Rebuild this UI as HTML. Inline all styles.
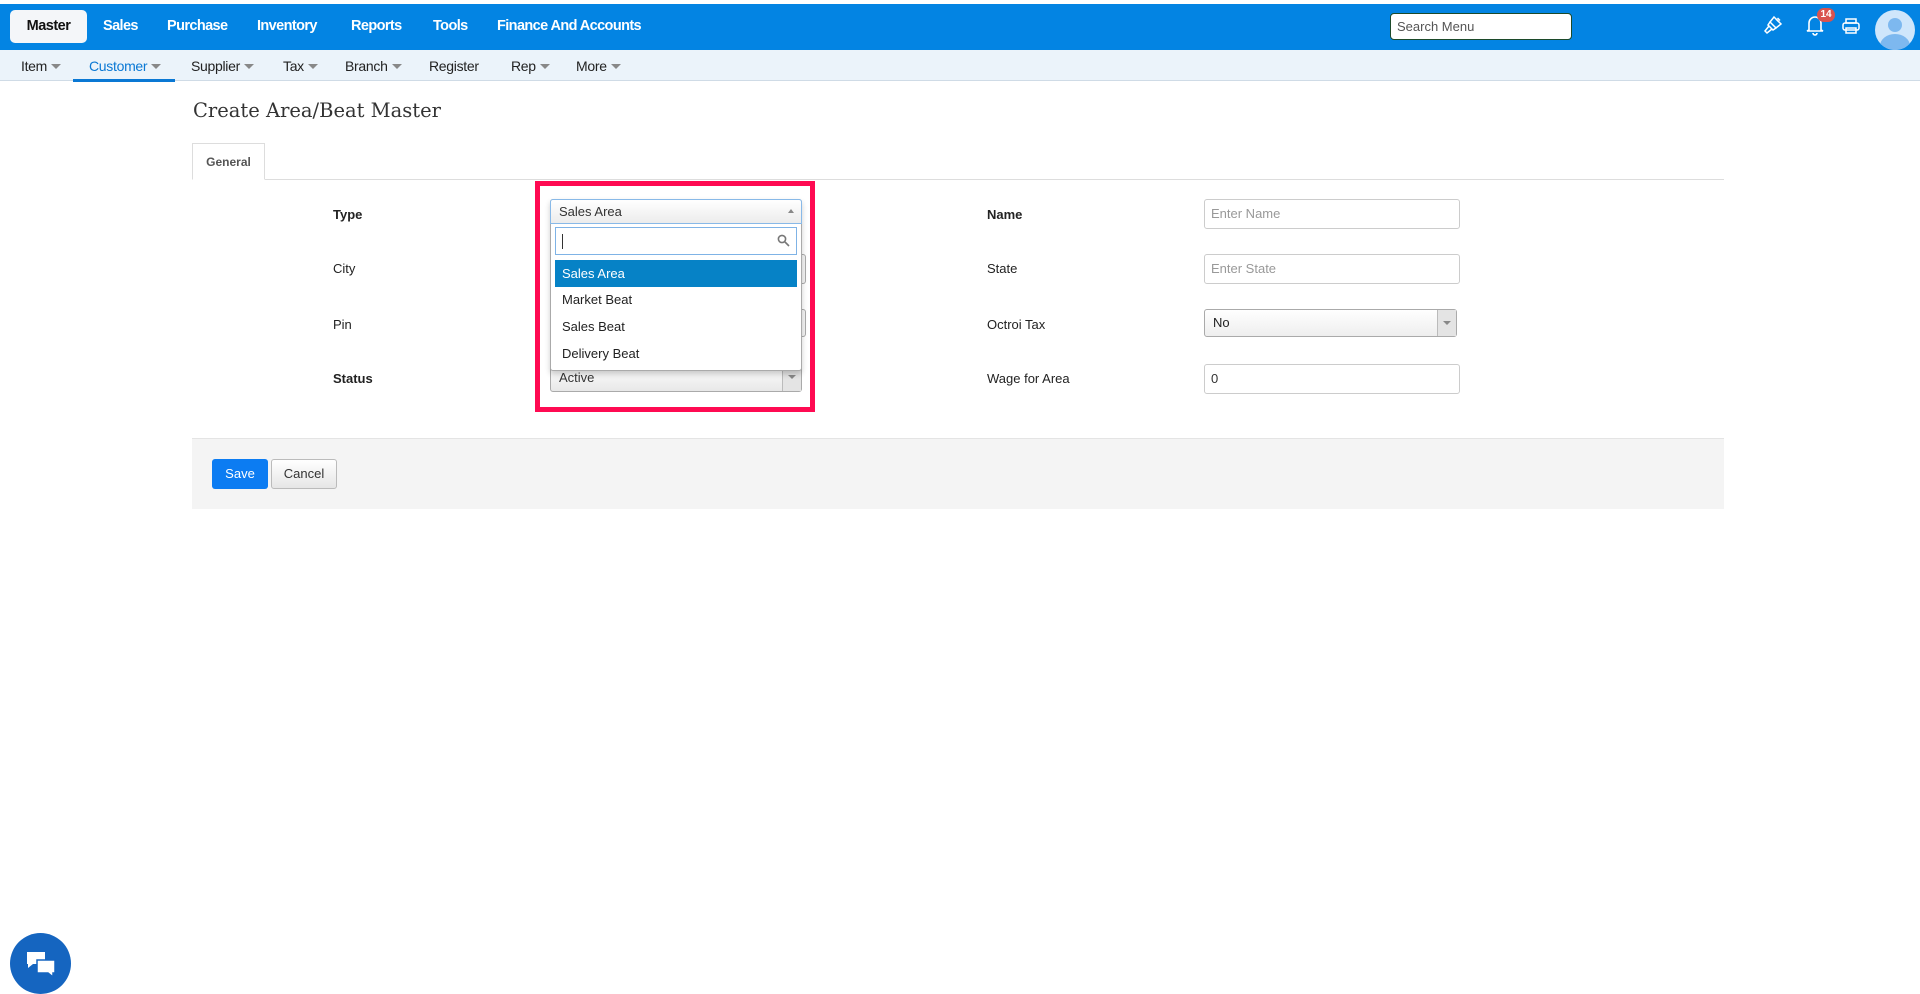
<!DOCTYPE html>
<html><head><meta charset="utf-8"><style>
*{box-sizing:border-box;margin:0;padding:0}
body{width:1920px;height:978px;background:#fff;font-family:"Liberation Sans",sans-serif;position:relative;overflow:hidden;color:#333}
.abs{position:absolute}
#top{left:0;top:4px;width:1920px;height:46px;background:#0384e3}
.tm{position:absolute;top:18px;color:#fff;font-weight:bold;font-size:14.5px;letter-spacing:-0.6px}
#master{left:10px;top:10px;width:77px;height:33px;background:#f4f6f9;border-radius:5px;color:#111;font-weight:bold;font-size:14.5px;text-align:center;line-height:33px;position:absolute;letter-spacing:-0.5px}
#search{left:1390px;top:13px;width:182px;height:27px;background:#fff;border:1px solid #1c4a2a;border-radius:4px;font-size:13px;color:#555;padding-left:6px;line-height:25px}
#sub{left:0;top:50px;width:1920px;height:31px;background:#ebf3fa;border-bottom:1px solid #cfdbe6}
.si{position:absolute;top:58px;font-size:14px;color:#222;letter-spacing:-0.3px}
.ar{display:inline-block;width:0;height:0;border-left:5px solid transparent;border-right:5px solid transparent;border-top:5px solid #888;margin-left:4px;vertical-align:2px}
.lbl{position:absolute;font-size:13px;color:#222}
.b{font-weight:bold}
.inp{position:absolute;border:1px solid #ccc;border-radius:3px;background:#fff;font-size:13px;color:#999;padding-left:6px}
.sel{position:absolute;border:1px solid #aaa;border-radius:3px;background:linear-gradient(#fff,#eee);font-size:13px;color:#333;padding-left:8px}
.opt{position:absolute;left:555px;width:242px;height:27px;font-size:13px;color:#222;padding-left:7px;line-height:27px}
</style></head><body>
<div id="top" class="abs"></div>
<div id="master">Master</div>
<div class="tm" style="left:103px">Sales</div>
<div class="tm" style="left:167px">Purchase</div>
<div class="tm" style="left:257px">Inventory</div>
<div class="tm" style="left:351px">Reports</div>
<div class="tm" style="left:433px">Tools</div>
<div class="tm" style="left:497px">Finance And Accounts</div>
<div id="search" class="abs">Search Menu</div>
<svg class="abs" style="left:1762px;top:14px" width="22" height="22" viewBox="0 0 22 22" fill="none" stroke="#fff" stroke-width="1.5"><path d="M12 3l7 7-5 4-6-6z"/><path d="M8 8l-2 3 5 5 3-2"/><path d="M7 12l-4 5 2 2 5-4"/><path d="M14 5l3 3M15.5 4l2.5 2.5"/></svg>
<svg class="abs" style="left:1805px;top:14px" width="20" height="22" viewBox="0 0 20 22" fill="none" stroke="#fff" stroke-width="1.6"><path d="M4 16V9a6 6 0 0112 0v7l2 1H2z"/><path d="M8 19a2 2 0 004 0"/></svg>
<div class="abs" style="left:1817px;top:8px;width:18px;height:14px;border-radius:7px;background:#d9534f;color:#fff;font-size:10px;font-weight:bold;text-align:center;line-height:14px">14</div>
<svg class="abs" style="left:1842px;top:18px" width="18" height="16" viewBox="0 0 18 16" fill="none" stroke="#fff" stroke-width="1.5"><rect x="4" y="1" width="10" height="4"/><rect x="1" y="5" width="16" height="7" rx="2"/><rect x="4" y="10" width="10" height="5"/></svg>
<div class="abs" style="left:1875px;top:10px;width:40px;height:40px;border-radius:50%;background:#cfe6fb;overflow:hidden"><div class="abs" style="left:13px;top:8px;width:14px;height:14px;border-radius:50%;background:#7db8ef"></div><div class="abs" style="left:5px;top:24px;width:30px;height:24px;border-radius:50%;background:#7db8ef"></div></div>
<div id="sub" class="abs"></div>
<div class="si" style="left:21px">Item<span class="ar"></span></div>
<div class="si" style="left:89px;color:#0a78d4">Customer<span class="ar"></span></div>
<div class="abs" style="left:73px;top:79px;width:102px;height:3px;background:#0a78d4"></div>
<div class="si" style="left:191px">Supplier<span class="ar"></span></div>
<div class="si" style="left:283px">Tax<span class="ar"></span></div>
<div class="si" style="left:345px">Branch<span class="ar"></span></div>
<div class="si" style="left:429px">Register</div>
<div class="si" style="left:511px">Rep<span class="ar"></span></div>
<div class="si" style="left:576px">More<span class="ar"></span></div>
<div class="abs" style="left:193px;top:99px;font-family:'DejaVu Serif',serif;font-size:19.5px;color:#333">Create Area/Beat Master</div>
<div class="abs" style="left:192px;top:143px;width:73px;height:37px;border:1px solid #ddd;border-bottom:1px solid #fff;background:#fff;font-size:12px;font-weight:bold;color:#555;text-align:center;line-height:36px;z-index:2">General</div>
<div class="abs" style="left:192px;top:179px;width:1532px;height:1px;background:#ddd"></div>
<div class="lbl b" style="left:333px;top:207px">Type</div>
<div class="lbl" style="left:333px;top:261px">City</div>
<div class="lbl" style="left:333px;top:317px">Pin</div>
<div class="lbl b" style="left:333px;top:371px">Status</div>
<div class="lbl b" style="left:987px;top:207px">Name</div>
<div class="lbl" style="left:987px;top:261px">State</div>
<div class="lbl" style="left:987px;top:317px">Octroi Tax</div>
<div class="lbl" style="left:987px;top:371px">Wage for Area</div>
<div class="inp" style="left:1204px;top:199px;width:256px;height:30px;line-height:28px">Enter Name</div>
<div class="inp" style="left:1204px;top:254px;width:256px;height:30px;line-height:28px">Enter State</div>
<div class="sel" style="left:1204px;top:309px;width:253px;height:28px;line-height:26px;color:#222">No<div class="abs" style="right:0;top:0;width:19px;height:26px;border-left:1px solid #bbb;background:#e4e4e4"><span class="abs" style="left:5px;top:11px;border-left:4px solid transparent;border-right:4px solid transparent;border-top:4px solid #888"></span></div></div>
<div class="inp" style="left:1204px;top:364px;width:256px;height:30px;line-height:28px;color:#333">0</div>
<div class="sel" style="left:797px;top:254px;width:8px;height:30px;border-left:none;background:#f4f4f4"></div>
<div class="sel" style="left:797px;top:309px;width:8px;height:28px;border-left:none;background:#f4f4f4"></div>
<div class="sel" style="left:550px;top:363px;width:252px;height:29px;line-height:27px;background:linear-gradient(#fff,#e8e8e8)">Active<div class="abs" style="right:0;top:0;width:19px;height:27px;border-left:1px solid #bbb;background:#e4e4e4"><span class="abs" style="left:5px;top:11px;border-left:4px solid transparent;border-right:4px solid transparent;border-top:4px solid #888"></span></div></div>
<div class="abs" style="left:550px;top:199px;width:252px;height:172px;border:1px solid #aaa;border-radius:3px;background:#fff;box-shadow:0 3px 6px rgba(0,0,0,.2)"></div>
<div class="abs" style="left:550px;top:199px;width:252px;height:25px;border:1px solid #88b9e8;border-radius:3px 3px 0 0;background:linear-gradient(#fff,#ececec);font-size:13px;line-height:23px;padding-left:8px;color:#333">Sales Area<span class="abs" style="right:7px;top:9px;border-left:3px solid transparent;border-right:3px solid transparent;border-bottom:4px solid #888"></span></div>
<div class="abs" style="left:555px;top:227px;width:242px;height:28px;border:1px solid #7fb3e6;background:#fff"><div class="abs" style="left:6px;top:6px;width:1px;height:15px;background:#333"></div><svg class="abs" style="right:6px;top:6px" width="13" height="13" viewBox="0 0 13 13" fill="none" stroke="#777" stroke-width="1.6"><circle cx="5" cy="5" r="3.6"/><path d="M8 8l4 4"/></svg></div>
<div class="opt" style="top:260px;background:#0682c6;color:#fff">Sales Area</div>
<div class="opt" style="top:286px">Market Beat</div>
<div class="opt" style="top:313px">Sales Beat</div>
<div class="opt" style="top:340px">Delivery Beat</div>
<div class="abs" style="left:535px;top:181px;width:280px;height:231px;border:5px solid #ff0a52"></div>
<div class="abs" style="left:192px;top:438px;width:1532px;height:71px;background:#f4f4f4;border-top:1px solid #e4e4e4"></div>
<div class="abs" style="left:212px;top:459px;width:56px;height:30px;background:#0c7cf2;border-radius:3px;color:#fff;font-size:13px;text-align:center;line-height:30px">Save</div>
<div class="abs" style="left:271px;top:459px;width:66px;height:30px;background:linear-gradient(#fff,#e6e6e6);border:1px solid #bbb;border-radius:3px;color:#333;font-size:13px;text-align:center;line-height:28px">Cancel</div>
<div class="abs" style="left:10px;top:933px;width:61px;height:61px;border-radius:50%;background:#1565c0"><svg class="abs" style="left:14px;top:16px" width="34" height="30" viewBox="0 0 34 30"><path d="M3 3h18v12H9l-5 4v-4H3z" fill="#fff"/><path d="M13 11h18v13h-2v4l-5-4H13z" fill="#fff" stroke="#1565c0" stroke-width="1.5"/></svg></div>
</body></html>
